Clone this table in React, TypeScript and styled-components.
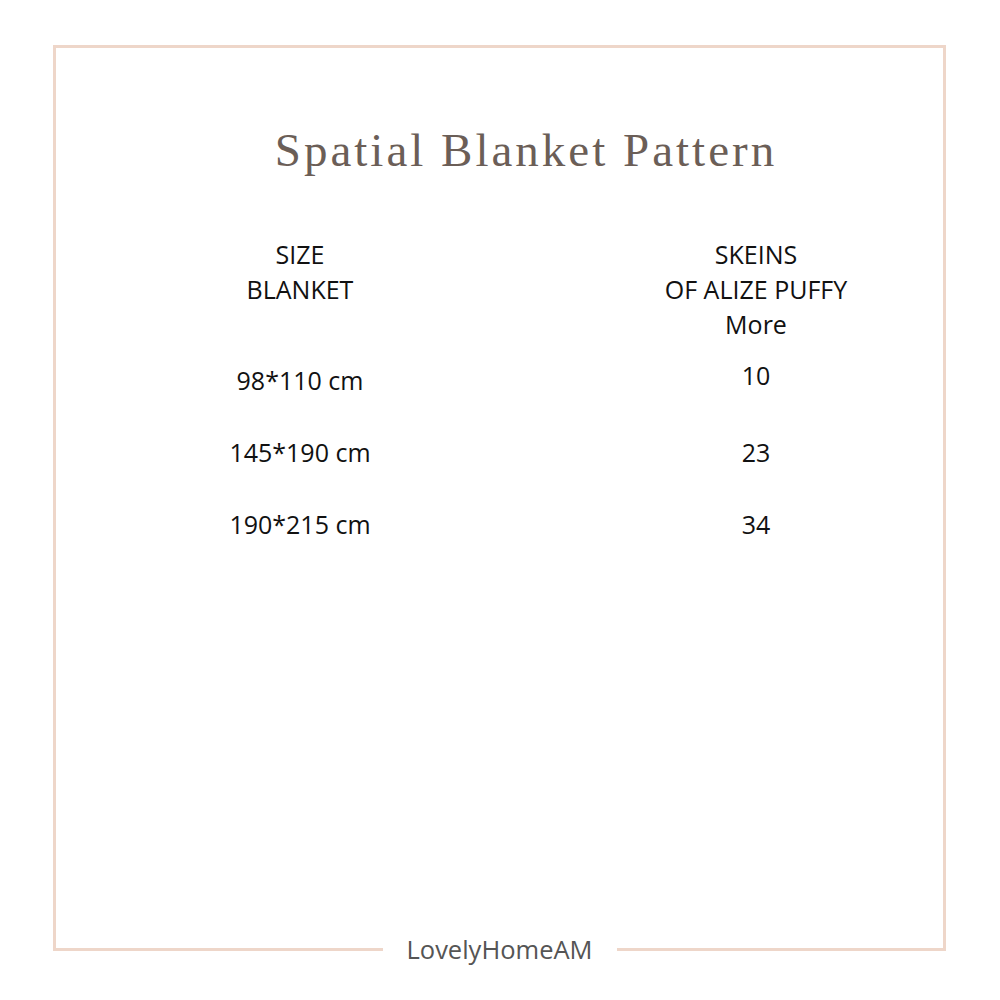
import React from "react";
import styled, { createGlobalStyle } from "styled-components";

const Global = createGlobalStyle`
  html, body { margin: 0; padding: 0; background: #ffffff; }
  body { width: 1000px; height: 1000px; overflow: hidden; }
`;

const Page = styled.div`
  width: 1000px;
  height: 1000px;
  box-sizing: border-box;
  padding: 45px 54px 0 53px;
  background: #ffffff;
`;

const Frame = styled.div`
  position: relative;
  box-sizing: border-box;
  height: 906px;
  border: 3px solid #eed6c9;
  display: flex;
  flex-direction: column;
  align-items: center;
  padding-top: 72px;
`;

const Title = styled.h1`
  margin: 0 0 0 53px;
  font-family: "Liberation Serif", "DejaVu Serif", serif;
  font-weight: 400;
  font-size: 47px;
  line-height: 60px;
  letter-spacing: 3px;
  color: #6b5e57;
`;

const Table = styled.div`
  align-self: stretch;
  margin-top: 57px;
  padding-left: 94px;
  display: grid;
  grid-template-columns: 300px 300px;
  column-gap: 156px;
  font-family: "Open Sans", "Liberation Sans", sans-serif;
  font-size: 25px;
  color: #111111;
`;

const Cell = styled.div<{ $shift?: number }>`
  text-align: center;
  line-height: 35px;
  white-space: nowrap;
  transform: translateY(${(p) => p.$shift ?? 0}px);
`;

const HeadCell = styled(Cell)`
  padding-bottom: 21px;
`;

const RowCell = styled(Cell)`
  height: 72px;
`;

const Footer = styled.div`
  position: absolute;
  left: 50%;
  bottom: -19px;
  transform: translateX(-50%);
  background: #ffffff;
  padding: 0 24px;
  font-family: "Open Sans", "Liberation Sans", sans-serif;
  font-size: 25.5px;
  line-height: 36px;
  color: #555555;
  white-space: nowrap;
`;

const rows = [
  { size: "98*110 cm", skeins: "10" },
  { size: "145*190 cm", skeins: "23" },
  { size: "190*215 cm", skeins: "34" },
];

export default function App() {
  return (
    <>
      <Global />
      <Page>
        <Frame>
          <Title>Spatial Blanket Pattern</Title>
          <Table>
            <HeadCell>
              SIZE
              <br />
              BLANKET
            </HeadCell>
            <HeadCell>
              SKEINS
              <br />
              OF ALIZE PUFFY
              <br />
              More
            </HeadCell>
            {rows.map((r, i) => (
              <React.Fragment key={r.size}>
                <RowCell>{r.size}</RowCell>
                <RowCell $shift={i === 0 ? -5 : 0}>{r.skeins}</RowCell>
              </React.Fragment>
            ))}
          </Table>
          <Footer>LovelyHomeAM</Footer>
        </Frame>
      </Page>
    </>
  );
}
